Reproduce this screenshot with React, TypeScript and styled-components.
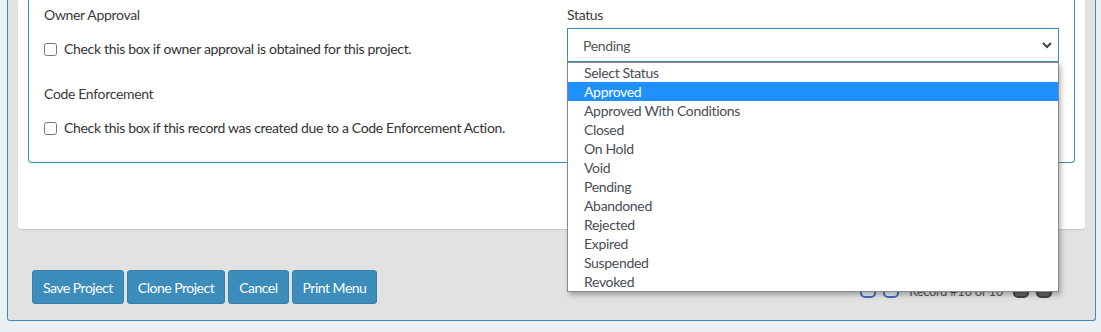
import React from 'react';
import styled, { createGlobalStyle } from 'styled-components';

const GlobalStyle = createGlobalStyle`
  html, body {
    margin: 0;
    padding: 0;
    background: #ecf0f5;
    font-family: Lato, 'Liberation Sans', sans-serif;
    font-size: 14px;
    letter-spacing: -0.33px;
    color: #333;
  }
  * { box-sizing: border-box; }
`;

const Panel = styled.div`
  margin: 0 5px 0 7px;
  background: #e2e2e2;
  border: 1px solid #3c8dbc;
  border-top: none;
  border-radius: 0 0 3px 3px;
  padding: 0 10px 16px 10px;
`;

const Card = styled.div`
  background: #fff;
  border-radius: 0 0 3px 3px;
  box-shadow: 0 1px 1px rgba(0, 0, 0, 0.12);
  padding: 0 10px 66px 10px;
`;

const Fieldset = styled.div`
  border: 1px solid #3c8dbc;
  border-top: none;
  border-radius: 0 0 4px 4px;
  padding: 5px 15px 24px 15px;
  display: grid;
  grid-template-columns: 1fr 1fr;
  column-gap: 31px;
`;

const Column = styled.div`
  display: flex;
  flex-direction: column;
`;

const FieldLabel = styled.div<{ $spaced?: boolean }>`
  line-height: 20px;
  color: #3a3a3a;
  margin-top: ${(p) => (p.$spaced ? '25px' : '0')};
`;

const CheckRow = styled.label`
  display: flex;
  align-items: center;
  gap: 7px;
  line-height: 20px;
  margin-top: 14px;

  input {
    margin: 0;
    width: 13px;
    height: 13px;
  }
`;

const SelectWrap = styled.div`
  position: relative;
  margin-top: 3px;
`;

const SelectBox = styled.div`
  height: 34px;
  border: 1px solid #3c8dbc;
  display: flex;
  align-items: center;
  justify-content: space-between;
  padding: 0 5px 0 15px;
  color: #555;
  background: #fff;
`;

const OptionList = styled.ul`
  position: absolute;
  left: 0;
  right: 0;
  top: 34px;
  margin: 0;
  padding: 0;
  list-style: none;
  background: #fff;
  border: 1px solid #8a8a8a;
  box-shadow: 2px 3px 5px rgba(0, 0, 0, 0.28);
  z-index: 10;
`;

const OptionItem = styled.li<{ $active?: boolean }>`
  height: 19px;
  line-height: 19px;
  padding-left: 16px;
  color: ${(p) => (p.$active ? '#fff' : '#484d55')};
  background: ${(p) => (p.$active ? '#1e90ff' : 'transparent')};
`;

const Footer = styled.div`
  display: flex;
  align-items: center;
  justify-content: space-between;
  margin-top: 41px;
  padding: 0 33px 0 14px;
`;

const ButtonGroup = styled.div`
  display: flex;
  gap: 3px;
`;

const Button = styled.button`
  height: 34px;
  padding: 0 10px;
  border: 1px solid #367fa9;
  border-radius: 3px;
  background: #3c8dbc;
  color: #fff;
  font-family: inherit;
  font-size: 14px;
  letter-spacing: -0.5px;
`;

const RecordNav = styled.div`
  display: flex;
  align-items: center;
  gap: 7px;
  color: #555;
  font-size: 13px;
  padding-top: 8px;
`;

const RecordText = styled.span`
  margin: 0 3px;
`;

const NavIcon = styled.span<{ $dark?: boolean }>`
  width: 16px;
  height: 14px;
  border-radius: 5px;
  border: 2px solid ${(p) => (p.$dark ? '#444' : '#3c70b0')};
  background: ${(p) => (p.$dark ? '#666' : '#e8eef7')};
`;

const statuses = [
  'Select Status',
  'Approved',
  'Approved With Conditions',
  'Closed',
  'On Hold',
  'Void',
  'Pending',
  'Abandoned',
  'Rejected',
  'Expired',
  'Suspended',
  'Revoked',
];

function Chevron() {
  return (
    <svg width="12" height="12" viewBox="0 0 12 12">
      <path d="M2 4 L6 8 L10 4" fill="none" stroke="#444" strokeWidth="2" />
    </svg>
  );
}

export default function App() {
  return (
    <>
      <GlobalStyle />
      <Panel>
        <Card>
          <Fieldset>
            <Column>
              <FieldLabel>Owner Approval</FieldLabel>
              <CheckRow>
                <input type="checkbox" />
                Check this box if owner approval is obtained for this project.
              </CheckRow>
              <FieldLabel $spaced>Code Enforcement</FieldLabel>
              <CheckRow>
                <input type="checkbox" />
                Check this box if this record was created due to a Code Enforcement Action.
              </CheckRow>
            </Column>
            <Column>
              <FieldLabel>Status</FieldLabel>
              <SelectWrap>
                <SelectBox>
                  Pending
                  <Chevron />
                </SelectBox>
                <OptionList>
                  {statuses.map((s) => (
                    <OptionItem key={s} $active={s === 'Approved'}>
                      {s}
                    </OptionItem>
                  ))}
                </OptionList>
              </SelectWrap>
            </Column>
          </Fieldset>
        </Card>
        <Footer>
          <ButtonGroup>
            <Button>Save Project</Button>
            <Button>Clone Project</Button>
            <Button>Cancel</Button>
            <Button>Print Menu</Button>
          </ButtonGroup>
          <RecordNav>
            <NavIcon />
            <NavIcon />
            <RecordText>Record #16 of 16</RecordText>
            <NavIcon $dark />
            <NavIcon $dark />
          </RecordNav>
        </Footer>
      </Panel>
    </>
  );
}
